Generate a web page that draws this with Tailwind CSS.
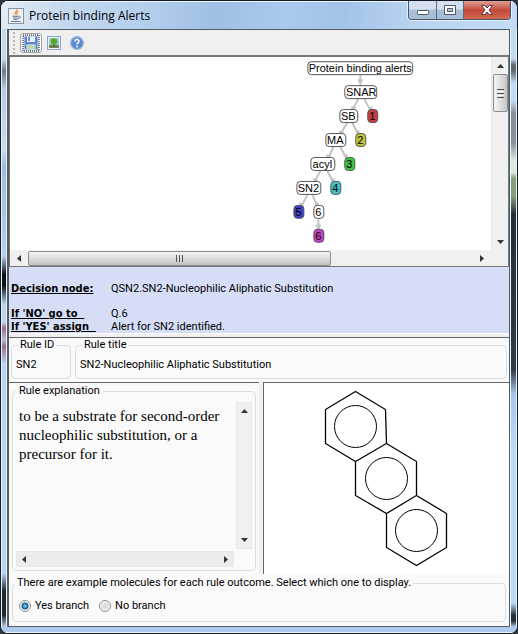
<!DOCTYPE html>
<html lang="en">
<head>
<meta charset="utf-8">
<title>Protein binding Alerts</title>
<script src="https://cdn.jsdelivr.net/npm/@tailwindcss/browser@4"></script>
</head>
<body class="bg-[#30383e]">
<div class="flex min-h-screen flex-col overflow-hidden rounded-lg border border-[#15191d] bg-[#bcd6f3] font-[Roboto,'DejaVu_Sans',sans-serif] text-[11px] text-black shadow-[inset_0_0_0_1px_#e6f6ff]">

  <!-- Title bar -->
  <header class="flex h-7 items-start justify-between bg-[linear-gradient(100deg,#e4edf6_0%,#c5d9ee_12%,#b3cfee_28%,#9fbfe3_42%,#a9caee_55%,#a2c3e8_66%,#b9d4f1_80%,#c4dbf5_100%)] pl-[7px] pr-[6px] shadow-[inset_0_1px_0_#f0f8ff]">
    <div class="flex items-center gap-[5px] pt-[5px]">
      <svg class="size-4" viewBox="0 0 16 16" aria-hidden="true">
        <rect x=".5" y=".5" width="15" height="15" fill="#eef0f2" stroke="#8795a3"/>
        <path d="M8.800 1.500c1 2-3.300 2.600-1.500 5.200M10.300 3.500c-2 1-2 1.600-1.300 3.300" fill="none" stroke="#e8822a" stroke-width="1.200"/>
        <path d="M4.500 8.300h6M5 10h5M5.500 11.600h4M3 13.500h9.500" stroke="#5f7f9f" fill="none"/>
        <path d="M10.500 8.300c3-.8 2.500 2-.5 2.300" stroke="#5f7f9f" fill="none"/>
      </svg>
      <h1 class="font-['Open_Sans',sans-serif] text-[12px] leading-5">Protein binding Alerts</h1>
    </div>
    <div class="flex h-[19px] overflow-hidden rounded-b-[4px] border border-t-0 border-[#46566a] shadow-[0_0_0_1px_#e5f1fc]">
      <button aria-label="Minimize" class="flex w-7 items-center justify-center border-r border-[#5b6c80] bg-linear-to-b from-[#d3e0ee] from-45% to-[#a9bfd7] to-50%">
        <svg class="h-4 w-3" viewBox="0 0 12 16"><rect x=".5" y="8.500" width="11" height="4" rx=".8" fill="#fff" stroke="#4b5564"/></svg>
      </button>
      <button aria-label="Maximize" class="flex w-[27px] items-center justify-center border-r border-[#5b6c80] bg-linear-to-b from-[#d3e0ee] from-45% to-[#a9bfd7] to-50%">
        <svg class="h-4 w-3" viewBox="0 0 12 16"><path d="M.5 3.500h11v9H.5zM3.500 6.500h5v3h-5z" fill="#fff" fill-rule="evenodd" stroke="#4b5564"/></svg>
      </button>
      <button aria-label="Close" class="flex w-[46px] items-center justify-center bg-linear-to-b from-[#dda095] from-0% via-[#c3493a] via-50% to-[#cf6a50]">
        <svg class="h-4 w-3" viewBox="0 0 12 16"><path d="M.5 3.500h3.300L6 6l2.200-2.500h3.300L8 8l3.500 4.500H8.200L6 10l-2.200 2.500H.5L4 8z" fill="#fff" stroke="#5b3a44"/></svg>
      </button>
    </div>
  </header>

  <div class="flex grow">
    <div class="w-[6px] shrink-0 border-x border-[#e6f6ff] bg-[linear-gradient(#c3d9ee_0%,#c3d9ee_5%,#6f7b8a_7%,#b5cbe4_10%,#c8dcf2_20%,#9dbbe0_23%,#b4d0f0_38%,#10131a_41%,#10131a_43%,#b9d4f2_46%,#b9d4f2_49%,#a06c8c_50%,#b9b9d8_52%,#a06c8c_53%,#b4d3f5_56%,#b4d3f5_91%,#22262f_94%,#22262f_98%,#b4cdea_100%)]"></div>

    <main class="flex min-w-0 grow flex-col border border-l-2 border-[#555a60] bg-[#fafafa]">
      <!-- Toolbar -->
      <div class="flex h-[25px] items-center bg-[#efefef] pl-1">
        <div class="mr-[5px] h-[22px] w-[2px] bg-[repeating-linear-gradient(#b9b9b9_0_2px,transparent_2px_4px)]"></div>
        <button aria-label="Save" class="flex h-5 w-[22px] items-center justify-center rounded-[3px] border border-[#a3a3a3] bg-white">
          <svg class="size-[18px] shrink-0" viewBox="0 0 18 18">
            <rect x="1" y="1" width="16" height="16" fill="#dfe8f8" stroke="#000" stroke-width="1" stroke-dasharray="1 1"/>
            <path d="M2.500 2.500h13v13h-12l-1-1z" fill="#5b86d2"/>
            <path d="M5 2.500h8v5.500H5z" fill="#e9f0fa"/><path d="M6 3h2v4H6z" fill="#6f95d6"/>
            <path d="M4.500 10.500h9v5h-9z" fill="#f2f7ee"/><path d="M5 12h8M5 14h8" stroke="#86c26a"/>
          </svg>
        </button>
        <button aria-label="Show picture" class="ml-[5px]">
          <svg class="size-[14px]" viewBox="0 0 14 14">
            <rect x=".5" y=".5" width="13" height="13" fill="#f4f8fc" stroke="#86a5d0"/>
            <path d="M2 2h10v10H2z" fill="#a8c4dc"/><path d="M2 9h10v3H2z" fill="#777f52"/>
            <circle cx="7" cy="5.500" r="3.300" fill="#4fae30"/><path d="M6.500 8h1v3h-1z" fill="#4d6a2a"/>
          </svg>
        </button>
        <button aria-label="Help" class="ml-[9px]">
          <svg class="size-[14px]" viewBox="0 0 14 14">
            <circle cx="7" cy="7" r="6.300" fill="#5c8bd0" stroke="#9ab6dd" stroke-width="1.200"/>
            <path d="M5 5.500C5 2.800 9.200 3 9 5.300 8.900 6.600 7 6.700 7 8.500" fill="none" stroke="#fff" stroke-width="1.400"/><circle cx="7" cy="10.500" r=".9" fill="#fff"/>
          </svg>
        </button>
      </div>

      <!-- Decision tree -->
      <section class="grid grid-cols-[1fr_17px] border-2 border-l border-b border-r border-[#777] bg-[#f0f0f0]">
        <svg class="h-[193px] w-full bg-white font-['Liberation_Sans',Arial,sans-serif] text-[11px]" viewBox="-1 0 482 193" text-anchor="middle" role="img" aria-label="Decision tree">
          <g stroke="#c4c4c4" stroke-width="2" fill="none">
            <path d="M350 18v9M348 42l-6 11M354 42l6 11M337 66l-7 11M342 66l6 11M323 90l-5 11M330 90l6 11M310 114l-6 11M317 114l6 11M297 138l-6 11M302 138l5 11M308 162v11"/>
          </g>
          <g fill="#c4c4c4">
            <path d="M347 22h6l-3 7zM341 49l5 2-5 5zM358 51l4-2 1 7zM329 73l5 2-5 5zM345 75l4-2 1 7zM316 97l5 2-5 5zM333 99l4-2 1 7zM303 121l5 2-5 5zM320 123l4-2 1 7zM289 145l5 2-5 5zM304 147l4-2 1 7zM305 168h6l-3 7z"/>
          </g>
          <g fill="#fff" stroke="#555">
            <rect x="297.500" y="4.500" width="105" height="13" rx="3.500"/>
            <rect x="334.500" y="28.500" width="32" height="13" rx="3.500"/>
            <rect x="329.500" y="52.500" width="18" height="13" rx="3.500"/>
            <rect x="315.500" y="76.500" width="20" height="13" rx="3.500"/>
            <rect x="300.500" y="100.500" width="24" height="13" rx="3.500"/>
            <rect x="286.500" y="124.500" width="24" height="13" rx="3.500"/>
            <rect x="303.500" y="148.500" width="10" height="13" rx="3.500"/>
            <rect x="357.500" y="52.500" width="10" height="13" rx="3.500" fill="#c44040"/>
            <rect x="345.500" y="76.500" width="10" height="13" rx="3.500" fill="#c4c440"/>
            <rect x="334.500" y="100.500" width="10" height="13" rx="3.500" fill="#40c440"/>
            <rect x="320.500" y="124.500" width="10" height="13" rx="3.500" fill="#40c4c4"/>
            <rect x="283.500" y="148.500" width="10" height="13" rx="3.500" fill="#4040c4"/>
            <rect x="303.500" y="172.500" width="10" height="13" rx="3.500" fill="#c440c4"/>
          </g>
          <text x="350" y="15">Protein binding alerts</text>
          <text x="351" y="39">SNAR</text>
          <text x="338" y="63">SB</text><text x="362" y="63">1</text>
          <text x="325" y="87">MA</text><text x="350" y="87">2</text>
          <text x="312" y="111">acyl</text><text x="339" y="111">3</text>
          <text x="298" y="135">SN2</text><text x="325" y="135">4</text>
          <text x="288" y="159">5</text><text x="308" y="159">6</text>
          <text x="308" y="183">6</text>
        </svg>
        <div class="flex flex-col items-center border-l border-[#e6e6e6]">
          <button aria-label="Scroll up" class="flex h-[17px] items-center"><svg class="h-1 w-[7px]" viewBox="0 0 7 4"><path d="M0 4l3.500-4L7 4z" fill="#333"/></svg></button>
          <div class="flex h-[38px] w-[15px] flex-col items-center justify-center gap-px rounded-xs border border-[#8c8c8c] bg-linear-to-r from-[#f6f6f6] to-[#c6c6ca]">
            <i class="h-px w-[7px] bg-[#555]"></i><i class="h-px w-[7px] bg-white"></i><i class="h-px w-[7px] bg-[#555]"></i><i class="h-px w-[7px] bg-white"></i><i class="h-px w-[7px] bg-[#555]"></i>
          </div>
          <button aria-label="Scroll down" class="mt-auto flex h-[17px] items-center"><svg class="h-1 w-[7px]" viewBox="0 0 7 4"><path d="M0 0l3.500 4L7 0z" fill="#333"/></svg></button>
        </div>
        <div class="flex h-4 items-center">
          <button aria-label="Scroll left" class="flex w-[18px] shrink-0 justify-center"><svg class="h-[7px] w-1" viewBox="0 0 4 7"><path d="M4 0L0 3.500 4 7z" fill="#333"/></svg></button>
          <div class="flex h-[15px] w-[63%] items-center justify-center gap-[2px] rounded-xs border border-[#8c8c8c] bg-linear-to-b from-[#f4f4f4] via-[#dcdcde] via-50% to-[#c0c0c4]">
            <i class="h-[7px] w-px bg-[#555]"></i><i class="h-[7px] w-px bg-[#555]"></i><i class="h-[7px] w-px bg-[#555]"></i>
          </div>
          <button aria-label="Scroll right" class="ml-auto flex w-[18px] shrink-0 justify-center"><svg class="h-[7px] w-1" viewBox="0 0 4 7"><path d="M0 0l4 3.500L0 7z" fill="#333"/></svg></button>
        </div>
      </section>

      <!-- Decision summary -->
      <dl class="grid grid-cols-[100px_1fr] border-b border-white bg-[#d6def7] pl-[2px] pt-[15px] leading-[13px]">
        <dt class="mb-3 font-['DejaVu_Sans_Condensed','DejaVu_Sans',sans-serif] font-bold underline">Decision node:</dt><dd>QSN2.SN2-Nucleophilic Aliphatic Substitution</dd>
        <dt class="whitespace-pre font-['DejaVu_Sans_Condensed','DejaVu_Sans',sans-serif] font-bold underline">If 'NO' go to  </dt><dd>Q.6</dd>
        <dt class="whitespace-pre font-['DejaVu_Sans_Condensed','DejaVu_Sans',sans-serif] font-bold underline">If 'YES' assign  </dt><dd>Alert for SN2 identified.</dd>
      </dl>
      <div class="h-1 border-b border-[#666] bg-[#f0f0f0]"></div>

      <!-- Rule identity -->
      <div class="flex gap-1 px-[2px] pb-[3px]">
        <fieldset class="h-[41px] w-[60px] shrink-0 rounded-[4px] border border-[#d5dfe5] pl-1">
          <legend class="ml-[2px] px-[2px] leading-[14px]">Rule ID</legend>
          <p class="pt-[5px] leading-4">SN2</p>
        </fieldset>
        <fieldset class="h-[41px] min-w-0 grow rounded-[4px] border border-[#d5dfe5] pl-1">
          <legend class="ml-[2px] px-[2px] leading-[14px]">Rule title</legend>
          <p class="pt-[5px] leading-4">SN2-Nucleophilic Aliphatic Substitution</p>
        </fieldset>
      </div>

      <!-- Explanation and structure -->
      <div class="flex grow">
        <div class="flex w-1/2 flex-col border-t border-[#666] px-[3px] pb-[3px] pt-px">
          <fieldset class="grow rounded-[4px] border border-[#d5dfe5] px-[3px]">
            <legend class="px-[3px] leading-[14px]">Rule explanation</legend>
            <div class="mt-1 grid h-[165px] grid-cols-[1fr_16px] grid-rows-[1fr_16px] gap-[2px]">
              <p class="pl-[3px] pt-[5px] font-['Liberation_Serif',serif] text-[15px] leading-[19px]">to be a substrate for second-order nucleophilic substitution, or a precursor for it.</p>
              <div class="flex flex-col items-center justify-between border border-[#e8e8e8] bg-[#f0f0f0] py-[6px]">
                <button aria-label="Scroll up" class="block"><svg class="h-1 w-[7px]" viewBox="0 0 7 4"><path d="M0 4l3.500-4L7 4z" fill="#333"/></svg></button>
                <button aria-label="Scroll down" class="block"><svg class="h-1 w-[7px]" viewBox="0 0 7 4"><path d="M0 0l3.500 4L7 0z" fill="#333"/></svg></button>
              </div>
              <div class="flex items-center justify-between border border-[#e8e8e8] bg-[#ececec] px-[5px]">
                <button aria-label="Scroll left" class="block"><svg class="h-[7px] w-1" viewBox="0 0 4 7"><path d="M4 0L0 3.500 4 7z" fill="#333"/></svg></button>
                <button aria-label="Scroll right" class="block"><svg class="h-[7px] w-1" viewBox="0 0 4 7"><path d="M0 0l4 3.500L0 7z" fill="#333"/></svg></button>
              </div>
            </div>
          </fieldset>
        </div>
        <div class="w-1 bg-[#f0f0f0]"></div>
        <div class="min-w-0 grow border-l border-t border-[#666] bg-white">
          <svg class="h-[191px] w-full" viewBox="264 383 245 191" role="img" aria-label="Molecular structure">
            <g fill="none" stroke="#000" stroke-width="1.300">
              <path d="M355.500 391.500L385.500 409.500 386.500 443.500 355.500 461.500 325.500 443.500V409.500zM386.500 443.500L416.500 461.500V495.500L386.500 513.500 355.500 495.500V461.500M416.500 495.500L446.500 513.500V547.500L416.500 565.500 386.500 547.500V513.500"/>
              <g stroke-width="1"><circle cx="355.500" cy="426.500" r="21"/><circle cx="386.500" cy="478.500" r="21"/><circle cx="416.500" cy="530.500" r="21"/></g>
            </g>
          </svg>
        </div>
      </div>

      <!-- Branch selection -->
      <div class="px-[3px] pb-1 pt-[2px]">
        <fieldset class="h-[46px] rounded-[4px] border border-[#d5dfe5] pl-[6px]">
          <legend class="-ml-1 px-[2px] leading-[14px]">There are example molecules for each rule outcome. Select which one to display.</legend>
          <div class="flex gap-[10px] pt-2">
            <label class="flex items-center gap-1"><input type="radio" name="branch" checked class="m-0 size-3 appearance-none rounded-full border border-[#8e8f8f] bg-[radial-gradient(circle,#5fc0e8_0_1px,#0f5078_3px,#f4f4f4_4px)]">Yes branch</label>
            <label class="flex items-center gap-1"><input type="radio" name="branch" class="m-0 size-3 appearance-none rounded-full border border-[#8e8f8f] bg-[radial-gradient(circle,#dcdcdc_0_2px,#f6f6f6_5px)]">No branch</label>
          </div>
        </fieldset>
      </div>
    </main>

    <div class="w-[7px] shrink-0 border-x border-[#e6f6ff] bg-[linear-gradient(#c3d9ee_0%,#c3d9ee_5%,#5d6a70_6%,#5d6a70_7%,#c3dcf4_9%,#c3dcf4_12%,#8b8f9c_14%,#8b8f9c_19%,#dde8e0_22%,#dde8e0_24%,#86a07a_25%,#86a07a_28%,#22303a_31%,#333a48_57%,#a6c5ec_61%,#b8dafb_70%,#b8dafb_96%,#22303a_98%,#22303a_99%,#b4cdea_100%)]"></div>
  </div>
  <div class="h-[6px] border-b border-[#e6f6ff] bg-[#b0cbee]"></div>
</div>
</body>
</html>
